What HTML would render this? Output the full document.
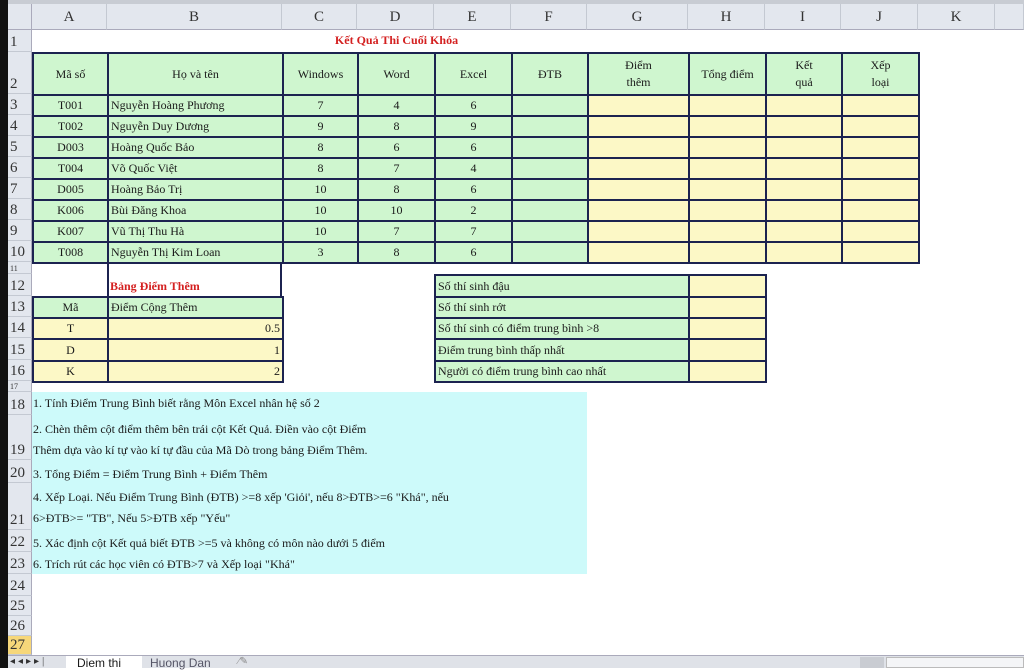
<!DOCTYPE html>
<html><head><meta charset="utf-8"><style>
*{margin:0;padding:0;box-sizing:border-box}
body{width:1024px;height:668px;overflow:hidden;background:#fff;position:relative;font-family:"Liberation Serif","DejaVu Serif",serif;color:#1a1a1a}
.a{position:absolute}
.colh{position:absolute;top:4px;height:26px;background:#e3e7ee;border-right:1px solid #c4c9d2;border-bottom:1px solid #aab;font-size:15px;color:#333;text-align:center;line-height:26px}
.rowh{position:absolute;left:8px;width:24px;background:#e3e7ee;border-bottom:1px solid #c4c9d2;border-right:1px solid #aab;font-size:15px;color:#333;padding-left:2px;display:flex;align-items:flex-end}
table{position:absolute;border-collapse:collapse;table-layout:fixed;font-size:12px}
td{border:2px solid #1c2350;padding:0 2px;white-space:nowrap;overflow:hidden}
.g{background:#cff6cf}.y{background:#fcf8c6}
.c{text-align:center}.r{text-align:right}
</style></head><body>
<div class="a" style="left:0;top:0;width:8px;height:668px;background:#111"></div>
<div class="a" style="left:8px;top:0;width:1016px;height:4px;background:#c8ccd3"></div>
<div class="a" style="left:8px;top:4px;width:24px;height:26px;background:#e3e7ee;border-right:1px solid #aab;border-bottom:1px solid #aab"></div>
<div class="colh" style="left:32px;width:75px">A</div>
<div class="colh" style="left:107px;width:175px">B</div>
<div class="colh" style="left:282px;width:75px">C</div>
<div class="colh" style="left:357px;width:77px">D</div>
<div class="colh" style="left:434px;width:77px">E</div>
<div class="colh" style="left:511px;width:76px">F</div>
<div class="colh" style="left:587px;width:101px">G</div>
<div class="colh" style="left:688px;width:77px">H</div>
<div class="colh" style="left:765px;width:76px">I</div>
<div class="colh" style="left:841px;width:77px">J</div>
<div class="colh" style="left:918px;width:77px">K</div>
<div class="colh" style="left:995px;width:29px"></div>

<div class="rowh" style="top:30px;height:22px">1</div>
<div class="rowh" style="top:52px;height:42px">2</div>
<div class="rowh" style="top:94px;height:21px">3</div>
<div class="rowh" style="top:115px;height:21px">4</div>
<div class="rowh" style="top:136px;height:21px">5</div>
<div class="rowh" style="top:157px;height:21px">6</div>
<div class="rowh" style="top:178px;height:21px">7</div>
<div class="rowh" style="top:199px;height:21px">8</div>
<div class="rowh" style="top:220px;height:21px">9</div>
<div class="rowh" style="top:241px;height:21px">10</div>
<div class="rowh" style="top:262px;height:12px;font-size:8px">11</div>
<div class="rowh" style="top:274px;height:22px">12</div>
<div class="rowh" style="top:296px;height:21px">13</div>
<div class="rowh" style="top:317px;height:21px">14</div>
<div class="rowh" style="top:338px;height:22px">15</div>
<div class="rowh" style="top:360px;height:21px">16</div>
<div class="rowh" style="top:381px;height:11px;font-size:8px">17</div>
<div class="rowh" style="top:392px;height:23px">18</div>
<div class="rowh" style="top:415px;height:45px">19</div>
<div class="rowh" style="top:460px;height:23px">20</div>
<div class="rowh" style="top:483px;height:47px">21</div>
<div class="rowh" style="top:530px;height:22px">22</div>
<div class="rowh" style="top:552px;height:22px">23</div>
<div class="rowh" style="top:574px;height:22px">24</div>
<div class="rowh" style="top:596px;height:20px">25</div>
<div class="rowh" style="top:616px;height:20px">26</div>
<div class="rowh" style="top:636px;height:19px;background:#f6d77a">27</div>

<div class="a" style="left:282px;top:33px;width:229px;text-align:center;font-size:12px;font-weight:bold;color:#d42020">Kết Quả Thi Cuối Khóa</div>

<table style="left:32px;top:52px;width:886px">
<colgroup><col style="width:75px"><col style="width:175px"><col style="width:75px"><col style="width:77px"><col style="width:77px"><col style="width:76px"><col style="width:101px"><col style="width:77px"><col style="width:76px"><col style="width:77px"></colgroup>
<tr style="height:42px" class="g"><td class="c">Mã số</td><td class="c">Họ và tên</td><td class="c">Windows</td><td class="c">Word</td><td class="c">Excel</td><td class="c">ĐTB</td><td class="c" style="line-height:17px">Điểm<br>thêm</td><td class="c">Tổng điểm</td><td class="c" style="line-height:17px">Kết<br>quả</td><td class="c" style="line-height:17px">Xếp<br>loại</td></tr>
<tr style="height:21px"><td class="g c">T001</td><td class="g">Nguyễn Hoàng Phương</td><td class="g c">7</td><td class="g c">4</td><td class="g c">6</td><td class="g"></td><td class="y"></td><td class="y"></td><td class="y"></td><td class="y"></td></tr>
<tr style="height:21px"><td class="g c">T002</td><td class="g">Nguyễn Duy Dương</td><td class="g c">9</td><td class="g c">8</td><td class="g c">9</td><td class="g"></td><td class="y"></td><td class="y"></td><td class="y"></td><td class="y"></td></tr>
<tr style="height:21px"><td class="g c">D003</td><td class="g">Hoàng Quốc Bảo</td><td class="g c">8</td><td class="g c">6</td><td class="g c">6</td><td class="g"></td><td class="y"></td><td class="y"></td><td class="y"></td><td class="y"></td></tr>
<tr style="height:21px"><td class="g c">T004</td><td class="g">Võ Quốc Việt</td><td class="g c">8</td><td class="g c">7</td><td class="g c">4</td><td class="g"></td><td class="y"></td><td class="y"></td><td class="y"></td><td class="y"></td></tr>
<tr style="height:21px"><td class="g c">D005</td><td class="g">Hoàng Bảo Trị</td><td class="g c">10</td><td class="g c">8</td><td class="g c">6</td><td class="g"></td><td class="y"></td><td class="y"></td><td class="y"></td><td class="y"></td></tr>
<tr style="height:21px"><td class="g c">K006</td><td class="g">Bùi Đăng Khoa</td><td class="g c">10</td><td class="g c">10</td><td class="g c">2</td><td class="g"></td><td class="y"></td><td class="y"></td><td class="y"></td><td class="y"></td></tr>
<tr style="height:21px"><td class="g c">K007</td><td class="g">Vũ Thị Thu Hà</td><td class="g c">10</td><td class="g c">7</td><td class="g c">7</td><td class="g"></td><td class="y"></td><td class="y"></td><td class="y"></td><td class="y"></td></tr>
<tr style="height:21px"><td class="g c">T008</td><td class="g">Nguyễn Thị Kim Loan</td><td class="g c">3</td><td class="g c">8</td><td class="g c">6</td><td class="g"></td><td class="y"></td><td class="y"></td><td class="y"></td><td class="y"></td></tr>
</table>

<div class="a" style="left:107px;top:262px;width:175px;height:34px;border-left:2px solid #1c2350;border-right:2px solid #1c2350"></div>
<div class="a" style="left:110px;top:279px;font-size:12px;font-weight:bold;color:#d42020">Bảng Điểm Thêm</div>
<table style="left:32px;top:296px;width:250px">
<colgroup><col style="width:75px"><col style="width:175px"></colgroup>
<tr style="height:21px" class="g"><td class="c">Mã</td><td>Điểm Cộng Thêm</td></tr>
<tr style="height:21px" class="y"><td class="c">T</td><td class="r">0.5</td></tr>
<tr style="height:22px" class="y"><td class="c">D</td><td class="r">1</td></tr>
<tr style="height:21px" class="y"><td class="c">K</td><td class="r">2</td></tr>
</table>

<table style="left:434px;top:274px;width:331px">
<colgroup><col style="width:254px"><col style="width:77px"></colgroup>
<tr style="height:22px"><td class="g">Số thí sinh đậu</td><td class="y"></td></tr>
<tr style="height:21px"><td class="g">Số thí sinh rớt</td><td class="y"></td></tr>
<tr style="height:21px"><td class="g">Số thí sinh có điểm trung bình &gt;8</td><td class="y"></td></tr>
<tr style="height:22px"><td class="g">Điểm trung bình thấp nhất</td><td class="y"></td></tr>
<tr style="height:21px"><td class="g">Người có điểm trung bình cao nhất</td><td class="y"></td></tr>
</table>

<div class="a" style="left:32px;top:392px;width:555px;height:182px;background:#cdfafa;font-size:12px;line-height:22px;padding-left:1px">
<div style="position:absolute;top:0">1. Tính Điểm Trung Bình biết rằng Môn Excel nhân hệ số 2</div>
<div style="position:absolute;top:26px">2. Chèn thêm cột điểm thêm bên trái cột Kết Quả. Điền vào cột Điểm</div>
<div style="position:absolute;top:47px">Thêm dựa vào kí tự vào kí tự đầu của Mã Dò trong bảng Điểm Thêm.</div>
<div style="position:absolute;top:71px">3. Tổng Điểm = Điểm Trung Bình + Điểm Thêm</div>
<div style="position:absolute;top:94px">4. Xếp Loại. Nếu Điểm Trung Bình (ĐTB) &gt;=8 xếp 'Giỏi', nếu 8&gt;ĐTB&gt;=6 "Khá", nếu</div>
<div style="position:absolute;top:115px">6&gt;ĐTB&gt;= "TB", Nếu 5&gt;ĐTB xếp "Yếu"</div>
<div style="position:absolute;top:140px">5. Xác định cột Kết quả biết ĐTB &gt;=5 và không có môn nào dưới 5 điểm</div>
<div style="position:absolute;top:161px">6. Trích rút các học viên có ĐTB&gt;7 và Xếp loại "Khá"</div>
</div>

<div class="a" style="left:8px;top:655px;width:1016px;height:13px;background:#dfe2e8;border-top:1px solid #aab"></div>
<div class="a" style="left:10px;top:656px;font-size:10px;color:#333;letter-spacing:3px">◂◂▸▸|</div>
<div class="a" style="left:66px;top:656px;width:76px;height:12px;background:#fff;font-size:12px;font-family:'Liberation Sans',sans-serif;padding-left:11px;line-height:14px">Diem thi</div>
<div class="a" style="left:150px;top:656px;font-size:12px;font-family:'Liberation Sans',sans-serif;color:#556;line-height:14px">Huong Dan</div>
<div class="a" style="left:238px;top:656px;font-size:10px;color:#888">⁄✎</div>
<div class="a" style="left:860px;top:657px;width:24px;height:11px;background:#c9ccd2"></div>
<div class="a" style="left:886px;top:657px;width:138px;height:11px;background:#f4f5f7;border:1px solid #bbb"></div>
</body></html>
